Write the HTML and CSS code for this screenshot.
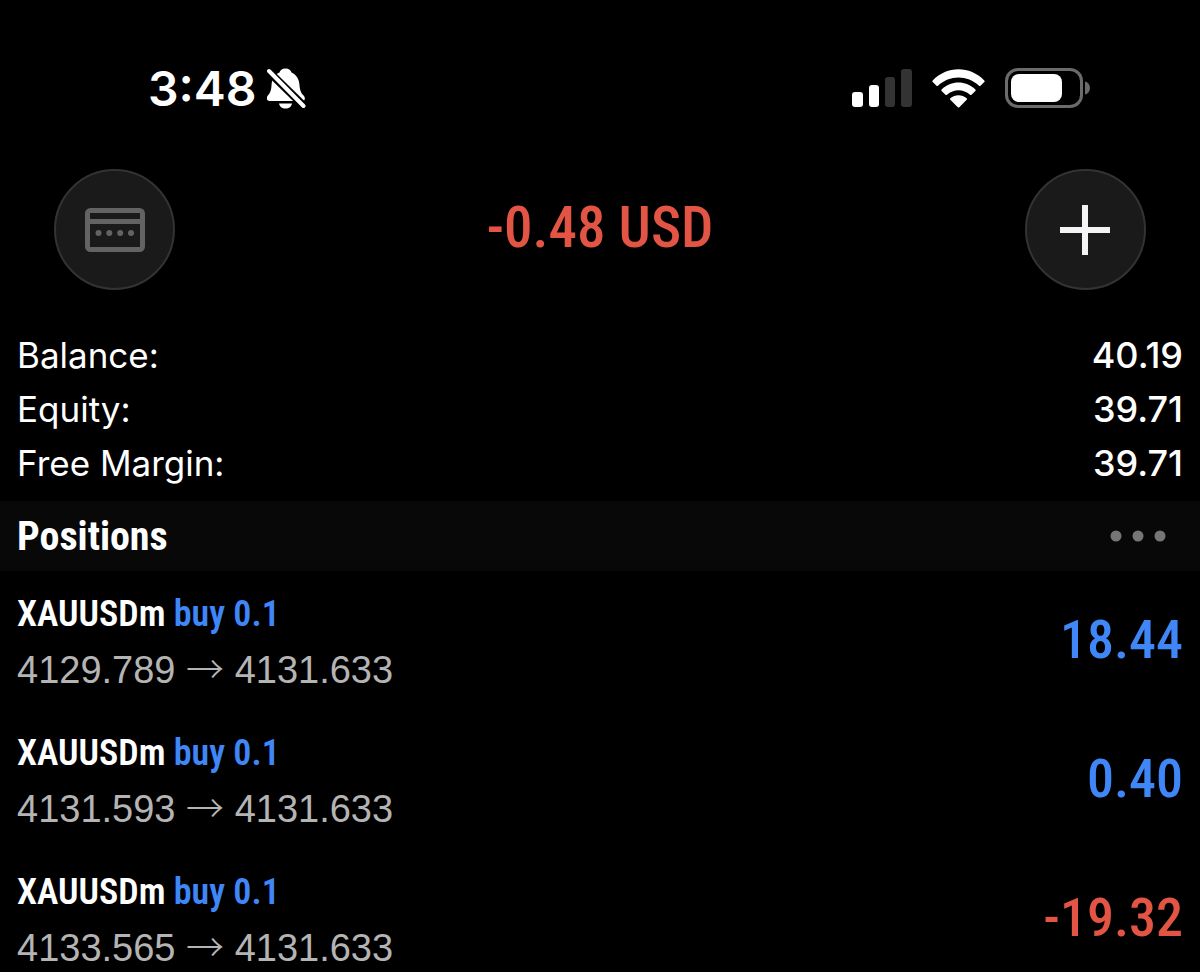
FILE: index.html
```html
<!DOCTYPE html>
<html lang="en">

<head>
  <meta charset="UTF-8" />
  <meta name="viewport" content="width=device-width, initial-scale=1" />
  <title>Trade</title>
  <link rel="stylesheet" href="styles.css">
</head>

<body>
  <!-- status bar -->
  <div class="status-bar">
    <div class="status-left">
      <span class="time">3:48</span>
      <svg class="bell" width="40" height="42" viewBox="0 0 40 42" aria-hidden="true">
        <path fill="#fff" d="M18.500 0.500c-3.500 0-5.500 2-6 4-6 2.500-7.500 7-8 13-.3 6-2 8-4 10.500-1.500 2-.8 5 2 5h33c2.500 0 3-3 1.500-5-2.500-2.500-4-4.500-4.500-10.500-.3-6-2.500-10.500-8-13-.5-2-2.500-4-6-4z" />
        <path fill="#fff" d="M12 35.500h13c-.5 3-3 5-6.500 5s-6-2-6.500-5z" />
        <path stroke="#000" stroke-width="8" d="M-2 0L40 41" />
        <path stroke="#fff" stroke-width="4" stroke-linecap="round" d="M2 3L36.500 38" />
      </svg>
    </div>
    <div class="status-right">
      <svg width="60" height="38" viewBox="0 0 60 38" aria-hidden="true">
        <rect x="0" y="23" width="11" height="15" rx="3" fill="#fff" />
        <rect x="17" y="16" width="10" height="22" rx="3" fill="#fff" />
        <rect x="33" y="8" width="10" height="30" rx="3" fill="#333" />
        <rect x="49" y="0" width="11" height="38" rx="3" fill="#333" />
      </svg>
      <svg width="53" height="39" viewBox="0 0 53 39" aria-hidden="true">
        <path fill="#fff" d="M.700 11.500C15-3.500 38-3.500 52.300 11.500c.5.500.5 1 0 1.500l-3.800 3.700c-.5.500-1 .5-1.500 0-11.500-11-29.500-11-41 0-.5.500-1 .5-1.500 0L.7 13c-.5-.5-.5-1 0-1.500z" />
        <path fill="#fff" d="M9.600 20.400c9.500-9.200 24.300-9.200 33.800 0 .5.500.5 1 0 1.500l-3.900 3.800c-.5.500-1 .5-1.500 0-6.500-6-16.500-6-23 0-.5.500-1 .5-1.500 0l-3.900-3.800c-.5-.5-.5-1 0-1.500z" />
        <path fill="#fff" d="M18.300 29.200c4.800-4 11.600-4 16.400 0 .5.500.5 1 0 1.500l-7.400 7.500c-.5.500-1 .5-1.500 0l-7.500-7.500c-.5-.5-.5-1 0-1.500z" />
      </svg>
      <svg width="86" height="40" viewBox="0 0 86 40" aria-hidden="true">
        <rect x="1.500" y="1.500" width="75" height="37" rx="11.500" fill="none" stroke="#6b6b6b" stroke-width="3" />
        <rect x="6" y="6" width="51" height="28" rx="8" fill="#fff" />
        <path fill="#6b6b6b" d="M80 13.500c3 .7 5 3.200 5 6.500s-2 5.800-5 6.500z" />
      </svg>
    </div>
  </div>

  <header class="top-bar">
    <button class="round-button" type="button" aria-label="Accounts">
      <svg width="60" height="44" viewBox="0 0 60 44" fill="#636363">
        <rect x="2.500" y="2.500" width="55" height="39" rx="3" fill="none" stroke="#636363" stroke-width="5" />
        <rect x="3" y="11" width="54" height="5" />
        <circle cx="13.500" cy="25" r="3" />
        <circle cx="24.300" cy="25" r="3" />
        <circle cx="35.200" cy="25" r="3" />
        <circle cx="46" cy="25" r="3" />
      </svg>
    </button>
    <h1 class="total loss">-0.48 USD</h1>
    <button class="round-button" type="button" aria-label="New order">
      <svg width="50" height="50" viewBox="0 0 50 50">
        <path stroke="#f4f4f6" stroke-width="6" d="M25 0v50M0 25h50" />
      </svg>
    </button>
  </header>

  <dl class="summary">
    <div class="summary-row">
      <dt>Balance:</dt>
      <dd>40.19</dd>
    </div>
    <div class="summary-row">
      <dt>Equity:</dt>
      <dd>39.71</dd>
    </div>
    <div class="summary-row">
      <dt>Free Margin:</dt>
      <dd>39.71</dd>
    </div>
  </dl>

  <div class="section-bar">
    <h2>Positions</h2>
    <button class="more-button" type="button" aria-label="More">
      <svg width="56" height="12" viewBox="0 0 56 12" fill="#767676">
        <circle cx="6" cy="6" r="5.500" />
        <circle cx="28" cy="6" r="5.500" />
        <circle cx="50" cy="6" r="5.500" />
      </svg>
    </button>
  </div>

  <ul class="positions">
    <li class="position">
      <div class="details">
        <div class="symbol">XAUUSDm <span class="profit">buy 0.1</span></div>
        <div class="prices">4129.789 <span class="arrow">→</span> 4131.633</div>
      </div>
      <div class="result profit">18.44</div>
    </li>
    <li class="position">
      <div class="details">
        <div class="symbol">XAUUSDm <span class="profit">buy 0.1</span></div>
        <div class="prices">4131.593 <span class="arrow">→</span> 4131.633</div>
      </div>
      <div class="result profit">0.40</div>
    </li>
    <li class="position">
      <div class="details">
        <div class="symbol">XAUUSDm <span class="profit">buy 0.1</span></div>
        <div class="prices">4133.565 <span class="arrow">→</span> 4131.633</div>
      </div>
      <div class="result loss">-19.32</div>
    </li>
  </ul>
</body>

</html>
```
FILE: styles.css
```css
* {
  box-sizing: border-box;
}

body {
  margin: 0;
  background-color: #000;
  color: #fff;
  font-family: Inter, "Liberation Sans", sans-serif;
}

h1,
h2,
dl,
dd,
ul {
  margin: 0;
  padding: 0;
}

button {
  padding: 0;
  border: none;
  background: none;
  cursor: pointer;
}

svg {
  display: block;
}

.profit {
  color: #3f86f7;
}

.loss {
  color: #e25444;
}

/* status bar */
.status-bar {
  display: flex;
  justify-content: space-between;
  align-items: center;
  padding: 60px 109px 0 148px;
}

.status-left {
  display: flex;
  align-items: center;
  gap: 10px;
}

.time {
  font-size: 48px;
  font-weight: 600;
  line-height: 58px;
}

.status-right {
  display: flex;
  align-items: center;
  gap: 20px;
  padding-bottom: 2px;
}

/* round buttons and the floating total */
.top-bar {
  display: flex;
  justify-content: space-between;
  align-items: center;
  padding: 51px 54px 38px;
}

.round-button {
  display: flex;
  justify-content: center;
  align-items: center;
  width: 121px;
  height: 121px;
  border: 2px solid #333;
  border-radius: 50%;
  background-color: #1a1a1a;
}

.total,
.result {
  font-family: "Roboto Condensed", "Liberation Sans Narrow", sans-serif;
  font-weight: 500;
  line-height: 64px;
}

.total {
  font-size: 57px;
  padding-bottom: 4px;
}

.result {
  font-size: 54px;
  padding-bottom: 4px;
}

/* account summary */
.summary {
  padding: 0 17px 11px;
}

.summary-row {
  display: flex;
  justify-content: space-between;
  font-size: 35px;
  line-height: 54px;
}

.summary-row dd {
  font-size: 36px;
  font-weight: 500;
}

/* positions */
.section-bar {
  display: flex;
  justify-content: space-between;
  align-items: center;
  height: 70px;
  padding: 0 34px 0 17px;
  background-color: #080808;
}

.section-bar h2 {
  font-family: "Roboto Condensed", "Liberation Sans Narrow", sans-serif;
  font-size: 40px;
}

.positions {
  display: flex;
  flex-direction: column;
  gap: 33px;
  padding: 18px 17px 0;
  list-style: none;
}

.position {
  display: flex;
  justify-content: space-between;
  align-items: center;
}

.details {
  display: flex;
  flex-direction: column;
  gap: 6px;
  line-height: 50px;
}

.symbol {
  font-family: "Roboto Condensed", "Liberation Sans Narrow", sans-serif;
  font-size: 36px;
  font-weight: 600;
}

.prices {
  color: #b4b4b4;
  font-family: "Liberation Sans", Arial, sans-serif;
  font-size: 38px;
}

.arrow {
  font-family: "Noto Sans CJK SC", sans-serif;
  font-weight: 300;
  line-height: 1;
}
```
